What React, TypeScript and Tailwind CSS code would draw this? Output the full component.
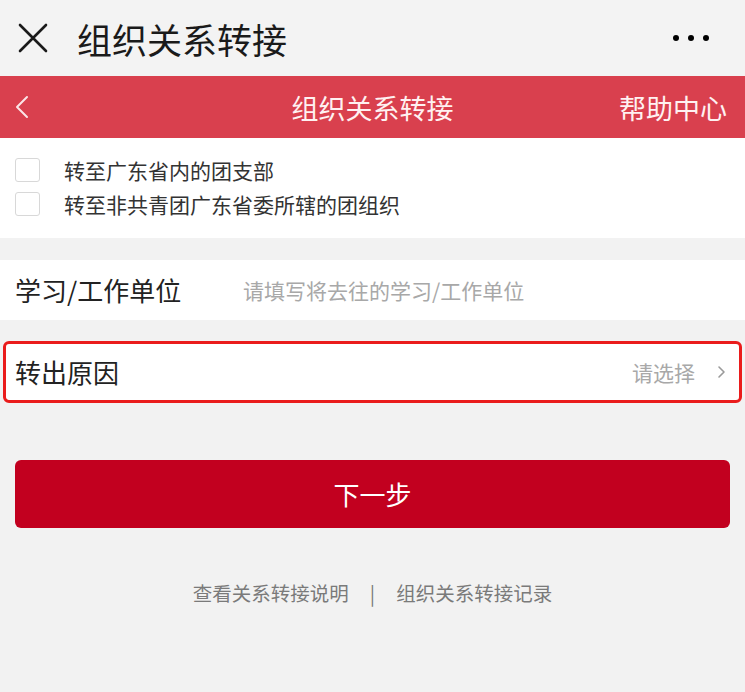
import React from "react";

const font = { fontFamily: '"Noto Sans CJK SC", "Noto Sans", sans-serif' };

export default function App() {
  return (
    <div className="w-[745px] h-[692px] bg-[#f2f2f2] overflow-hidden" style={font}>
      {/* top WeChat bar */}
      <div className="h-[76px] flex items-center px-[18px] bg-[#f3f3f3]">
        <svg width="30" height="30" viewBox="0 0 30 30" className="shrink-0">
          <path d="M2 2 L28 28 M28 2 L2 28" stroke="#1a1a1a" strokeWidth="2.6" strokeLinecap="round" />
        </svg>
        <span className="ml-[29px] text-[35px] text-[#1a1a1a] leading-none">组织关系转接</span>
        <div className="ml-auto mr-[18px] flex gap-[9px]">
          <span className="w-[6px] h-[6px] rounded-full bg-black" />
          <span className="w-[6px] h-[6px] rounded-full bg-black" />
          <span className="w-[6px] h-[6px] rounded-full bg-black" />
        </div>
      </div>
      {/* red header */}
      <div className="h-[62px] bg-[#d9404e] flex items-center relative px-[14px]">
        <svg width="16" height="24" viewBox="0 0 16 24">
          <path d="M13 2 L3 12 L13 22" stroke="#fbe5e7" strokeWidth="2" fill="none" strokeLinecap="round" strokeLinejoin="round" />
        </svg>
        <span className="absolute left-0 right-0 text-center text-[27px] text-[#fff1f1] leading-none">组织关系转接</span>
        <span className="ml-auto text-[27px] text-[#fff1f1] leading-none mr-[4px]">帮助中心</span>
      </div>
      {/* checkboxes */}
      <div className="bg-white h-[100px] pt-[20px] pl-[15px] flex flex-col gap-[10px]">
        <div className="flex items-center h-[24px]">
          <span className="w-[25px] h-[24px] border border-[#d8d8d8] rounded-[3px]" />
          <span className="ml-[24px] text-[21px] text-[#333] leading-none">转至广东省内的团支部</span>
        </div>
        <div className="flex items-center h-[24px]">
          <span className="w-[25px] h-[24px] border border-[#d8d8d8] rounded-[3px]" />
          <span className="ml-[24px] text-[21px] text-[#333] leading-none">转至非共青团广东省委所辖的团组织</span>
        </div>
      </div>
      <div className="h-[22px]" />
      {/* unit row */}
      <div className="bg-white h-[60px] flex items-center pl-[15px]">
        <span className="w-[228px] text-[26px] text-[#222] leading-none">学习/工作单位</span>
        <span className="text-[21px] text-[#a8a8a8] leading-none">请填写将去往的学习/工作单位</span>
      </div>
      <div className="h-[21px]" />
      {/* reason row */}
      <div className="mx-[3px] h-[62px] bg-white border-[3px] border-[#ea1c1c] rounded-[6px] flex items-center pl-[9px] pr-[12px]">
        <span className="text-[26px] text-[#222] leading-none">转出原因</span>
        <span className="ml-auto text-[21px] text-[#a8a8a8] leading-none">请选择</span>
        <svg width="10" height="16" viewBox="0 0 10 16" className="ml-[22px]">
          <path d="M2 3 L7 8 L2 13" stroke="#9a9a9a" strokeWidth="1.6" fill="none" strokeLinecap="round" strokeLinejoin="round" />
        </svg>
      </div>
      {/* button */}
      <div className="px-[15px] pt-[57px]">
        <div className="h-[68px] bg-[#c2001f] rounded-[6px] flex items-center justify-center">
          <span className="text-[26px] text-white leading-none">下一步</span>
        </div>
      </div>
      {/* footer links */}
      <div className="mt-[55px] flex justify-center items-center text-[19.5px] text-[#7a7a7a] leading-none">
        <span>查看关系转接说明</span>
        <span className="mx-[21px]">|</span>
        <span>组织关系转接记录</span>
      </div>
    </div>
  );
}
